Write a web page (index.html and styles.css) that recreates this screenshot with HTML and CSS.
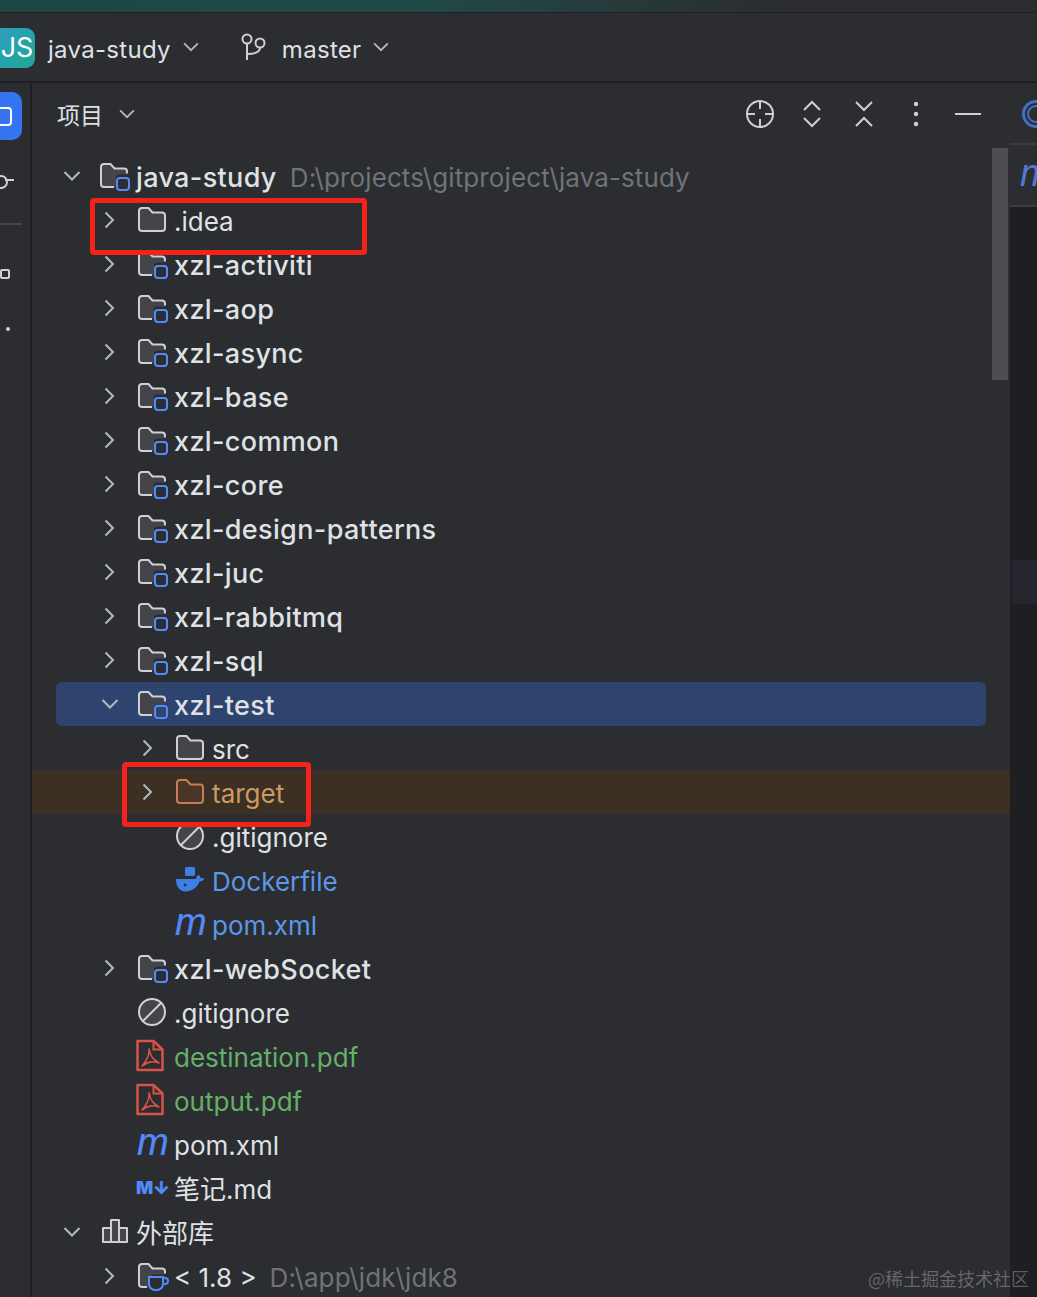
FILE: index.html
```html
<!DOCTYPE html>
<html lang="en">
  <head>
    <meta charset="UTF-8">
    <title>java-study</title>
    <link rel="stylesheet" href="styles.css">
  </head>
  <body>
    <svg class="defs" width="0" height="0">
      <symbol id="folder" viewBox="0 0 32 30">
        <path d="M1 21V4a3 3 0 0 1 3-3h6.500l4 4.500H24a3 3 0 0 1 3 3V21a3 3 0 0 1-3 3H4a3 3 0 0 1-3-3z" fill="#43454a" stroke="#ced0d6" stroke-width="2"/>
      </symbol>
      <symbol id="folder-target" viewBox="0 0 32 30">
        <path d="M1 21V4a3 3 0 0 1 3-3h6.500l4 4.500H24a3 3 0 0 1 3 3V21a3 3 0 0 1-3 3H4a3 3 0 0 1-3-3z" fill="#4a3629" stroke="#c77d55" stroke-width="2"/>
      </symbol>
      <symbol id="module" viewBox="0 0 32 30">
        <path d="M1 21V4a3 3 0 0 1 3-3h6.500l4 4.500H24a3 3 0 0 1 3 3v3H19a3 3 0 0 0-3 3V24H4a3 3 0 0 1-3-3z" fill="#43454a"/>
        <path d="M14 24H4a3 3 0 0 1-3-3V4a3 3 0 0 1 3-3h6.500l4 4.500H24a3 3 0 0 1 3 3v2" fill="none" stroke="#ced0d6" stroke-width="2"/>
        <rect x="17" y="15" width="12" height="12" rx="3" fill="none" stroke="#548af7" stroke-width="2"/>
      </symbol>
      <symbol id="jdk" viewBox="0 0 32 30">
        <path d="M1 21V4a3 3 0 0 1 3-3h6.500l4 4.500H24a3 3 0 0 1 3 3v3H14V24H4a3 3 0 0 1-3-3z" fill="#43454a"/>
        <path d="M9 24H4a3 3 0 0 1-3-3V4a3 3 0 0 1 3-3h6.500l4 4.500H24a3 3 0 0 1 3 3v2" fill="none" stroke="#ced0d6" stroke-width="2"/>
        <path d="M11 14h14v7a6 6 0 0 1-6 6h-2a6 6 0 0 1-6-6zM25 15h2a2.500 2.500 0 0 1 0 6h-2" fill="#2b2d30" stroke="#548af7" stroke-width="2"/>
      </symbol>
      <symbol id="ignore" viewBox="0 0 32 30">
        <circle cx="14" cy="14" r="13" fill="#43454a" stroke="#ced0d6" stroke-width="2"/>
        <path d="M5 23 23 5" stroke="#ced0d6" stroke-width="2"/>
      </symbol>
      <symbol id="pdf" viewBox="0 0 30 34">
        <path d="M1.500 3h16l9 8.500V32H1.500z" fill="none" stroke="#d9534a" stroke-width="2.500" stroke-linejoin="round"/>
        <path d="M17.500 3v8.500h9" fill="none" stroke="#d9534a" stroke-width="2"/>
        <path d="M13 11c1 6 3 10 10 14-6-2-10-2-17 3 3-3 8-11 7-17z" fill="none" stroke="#d9534a" stroke-width="1.600" stroke-linejoin="round"/>
      </symbol>
      <symbol id="docker" viewBox="0 0 32 30">
        <rect x="9" y="0" width="10" height="9" rx="1.500" fill="#3d7fe8"/>
        <path d="M0 12h20c.5-3 2-4 3-4 1 1 1.500 2 1.500 3 1.500 0 3 0 4 .500-1 2-3 3-5 3-2 6-8 10-14 10-6 0-9.500-5-9.500-12.500z" fill="#3d7fe8"/>
        <circle cx="9" cy="18" r="1.400" fill="#2b2d30"/>
      </symbol>
      <symbol id="chev-right" viewBox="0 0 24 24">
        <path d="M7.500 4.500 15 12 7.500 19.500" fill="none" stroke="#b4b8bf" stroke-width="2"/>
      </symbol>
      <symbol id="chev-down" viewBox="0 0 24 24">
        <path d="M4.500 8 12 15.500 19.500 8" fill="none" stroke="#b4b8bf" stroke-width="2"/>
      </symbol>
    </svg>

    <div class="top-strip"></div>

    <header class="title-bar">
      <span class="project-tile">JS</span>
      <span class="bar-label">java-study</span>
      <svg class="bar-chevron"><use href="#chev-down"/></svg>
      <svg class="branch-icon" viewBox="0 0 26 28">
        <circle cx="7" cy="6" r="4.500" fill="none" stroke="#ced0d6" stroke-width="2"/>
        <circle cx="20" cy="10" r="4.500" fill="none" stroke="#ced0d6" stroke-width="2"/>
        <path d="M7 10.500V27M7 21c7 0 13-1 13-6.500" fill="none" stroke="#ced0d6" stroke-width="2"/>
      </svg>
      <span class="bar-label branch-label">master</span>
      <svg class="bar-chevron"><use href="#chev-down"/></svg>
    </header>

    <main class="workspace">
      <nav class="rail">
        <div class="rail-active"><span class="rail-square"></span></div>
        <div class="rail-pin"></div>
        <div class="rail-sep"></div>
        <div class="rail-small"></div>
        <div class="rail-dot"></div>
      </nav>

      <section class="panel">
        <div class="panel-head">
          <span class="panel-title">项目</span>
          <svg class="panel-chevron"><use href="#chev-down"/></svg>
          <div class="tools">
            <svg class="tool" viewBox="0 0 30 30">
              <circle cx="15" cy="15" r="13" fill="none" stroke="#ced0d6" stroke-width="2"/>
              <path d="M15 2v8M15 20v8M2 15h8M20 15h8" stroke="#ced0d6" stroke-width="2"/>
            </svg>
            <svg class="tool" viewBox="0 0 30 30">
              <path d="M7 11l8-8 8 8M7 19l8 8 8-8" fill="none" stroke="#ced0d6" stroke-width="2"/>
            </svg>
            <svg class="tool" viewBox="0 0 30 30">
              <path d="M7 3l8 8 8-8M7 27l8-8 8 8" fill="none" stroke="#ced0d6" stroke-width="2"/>
            </svg>
            <svg class="tool" viewBox="0 0 30 30">
              <circle cx="15" cy="5" r="2.200" fill="#ced0d6"/>
              <circle cx="15" cy="15" r="2.200" fill="#ced0d6"/>
              <circle cx="15" cy="25" r="2.200" fill="#ced0d6"/>
            </svg>
            <svg class="tool" viewBox="0 0 30 30">
              <path d="M2 15h26" stroke="#ced0d6" stroke-width="2"/>
            </svg>
          </div>
        </div>

        <ul class="tree">
          <li class="row l0">
            <svg class="chev"><use href="#chev-down"/></svg>
            <svg class="icon"><use href="#module"/></svg>
            <span class="name module">java-study</span>
            <span class="path">D:\projects\gitproject\java-study</span>
          </li>
          <li class="row l1">
            <svg class="chev"><use href="#chev-right"/></svg>
            <svg class="icon"><use href="#folder"/></svg>
            <span class="name">.idea</span>
          </li>
          <li class="row l1">
            <svg class="chev"><use href="#chev-right"/></svg>
            <svg class="icon"><use href="#module"/></svg>
            <span class="name module">xzl-activiti</span>
          </li>
          <li class="row l1">
            <svg class="chev"><use href="#chev-right"/></svg>
            <svg class="icon"><use href="#module"/></svg>
            <span class="name module">xzl-aop</span>
          </li>
          <li class="row l1">
            <svg class="chev"><use href="#chev-right"/></svg>
            <svg class="icon"><use href="#module"/></svg>
            <span class="name module">xzl-async</span>
          </li>
          <li class="row l1">
            <svg class="chev"><use href="#chev-right"/></svg>
            <svg class="icon"><use href="#module"/></svg>
            <span class="name module">xzl-base</span>
          </li>
          <li class="row l1">
            <svg class="chev"><use href="#chev-right"/></svg>
            <svg class="icon"><use href="#module"/></svg>
            <span class="name module">xzl-common</span>
          </li>
          <li class="row l1">
            <svg class="chev"><use href="#chev-right"/></svg>
            <svg class="icon"><use href="#module"/></svg>
            <span class="name module">xzl-core</span>
          </li>
          <li class="row l1">
            <svg class="chev"><use href="#chev-right"/></svg>
            <svg class="icon"><use href="#module"/></svg>
            <span class="name module">xzl-design-patterns</span>
          </li>
          <li class="row l1">
            <svg class="chev"><use href="#chev-right"/></svg>
            <svg class="icon"><use href="#module"/></svg>
            <span class="name module">xzl-juc</span>
          </li>
          <li class="row l1">
            <svg class="chev"><use href="#chev-right"/></svg>
            <svg class="icon"><use href="#module"/></svg>
            <span class="name module">xzl-rabbitmq</span>
          </li>
          <li class="row l1">
            <svg class="chev"><use href="#chev-right"/></svg>
            <svg class="icon"><use href="#module"/></svg>
            <span class="name module">xzl-sql</span>
          </li>
          <li class="row l1 selected">
            <svg class="chev"><use href="#chev-down"/></svg>
            <svg class="icon"><use href="#module"/></svg>
            <span class="name module">xzl-test</span>
          </li>
          <li class="row l2">
            <svg class="chev"><use href="#chev-right"/></svg>
            <svg class="icon"><use href="#folder"/></svg>
            <span class="name">src</span>
          </li>
          <li class="row l2 excluded">
            <svg class="chev"><use href="#chev-right"/></svg>
            <svg class="icon"><use href="#folder-target"/></svg>
            <span class="name">target</span>
          </li>
          <li class="row l2">
            <span class="chev"></span>
            <svg class="icon icon-round"><use href="#ignore"/></svg>
            <span class="name">.gitignore</span>
          </li>
          <li class="row l2">
            <span class="chev"></span>
            <svg class="icon"><use href="#docker"/></svg>
            <span class="name blue">Dockerfile</span>
          </li>
          <li class="row l2">
            <span class="chev"></span>
            <span class="icon maven">m</span>
            <span class="name blue">pom.xml</span>
          </li>
          <li class="row l1">
            <svg class="chev"><use href="#chev-right"/></svg>
            <svg class="icon"><use href="#module"/></svg>
            <span class="name module">xzl-webSocket</span>
          </li>
          <li class="row l1">
            <span class="chev"></span>
            <svg class="icon icon-round"><use href="#ignore"/></svg>
            <span class="name">.gitignore</span>
          </li>
          <li class="row l1">
            <span class="chev"></span>
            <svg class="icon icon-pdf"><use href="#pdf"/></svg>
            <span class="name green">destination.pdf</span>
          </li>
          <li class="row l1">
            <span class="chev"></span>
            <svg class="icon icon-pdf"><use href="#pdf"/></svg>
            <span class="name green">output.pdf</span>
          </li>
          <li class="row l1">
            <span class="chev"></span>
            <span class="icon maven">m</span>
            <span class="name">pom.xml</span>
          </li>
          <li class="row l1">
            <span class="chev"></span>
            <span class="icon markdown">M↓</span>
            <span class="name cjk">笔记.md</span>
          </li>
          <li class="row l0">
            <svg class="chev"><use href="#chev-down"/></svg>
            <svg class="icon" viewBox="0 0 32 30">
              <path d="M3 9h8v14H3zM11 1h8v22h-8zM19 9h8v14h-8z" fill="#43454a" stroke="#ced0d6" stroke-width="2" stroke-linejoin="round"/>
            </svg>
            <span class="name cjk">外部库</span>
          </li>
          <li class="row l1">
            <svg class="chev"><use href="#chev-right"/></svg>
            <svg class="icon"><use href="#jdk"/></svg>
            <span class="name">&lt; 1.8 &gt;</span>
            <span class="path">D:\app\jdk\jdk8</span>
          </li>
        </ul>

        <div class="scroll-thumb"></div>
        <div class="mark mark-idea"></div>
        <div class="mark mark-target"></div>
      </section>

      <aside class="editor-edge">
        <div class="edge-tab"><span class="edge-ring"></span></div>
        <div class="edge-file">m</div>
        <div class="edge-thumb"></div>
      </aside>
    </main>

    <div class="watermark">@稀土掘金技术社区</div>
  </body>
</html>
```

FILE: styles.css
```css
* {
  box-sizing: border-box;
}

html,
body {
  height: 100%;
}

body {
  margin: 0;
  overflow: hidden;
  position: relative;
  background-color: #2b2d30;
  color: #dfe1e5;
  font-family: Inter, "Noto Sans CJK SC", sans-serif;
  display: flex;
  flex-direction: column;
}

.defs {
  position: absolute;
}

.top-strip {
  height: 13px;
  background: linear-gradient(90deg, #1d4645 0%, #204a47 40%, #2b2d30 75%);
  border-bottom: 1px solid #1e1f22;
}

.title-bar {
  height: 70px;
  display: flex;
  align-items: center;
  border-bottom: 2px solid #1e1f22;
  padding-top: 3px;
}

.project-tile {
  width: 36px;
  height: 40px;
  margin-left: -1px;
  margin-top: -2px;
  border-radius: 0 9px 9px 0;
  background: linear-gradient(135deg, #2d9fc0, #1fa695);
  color: #fff;
  font-size: 27px;
  line-height: 40px;
  text-align: center;
}

.bar-label {
  margin-left: 13px;
  margin-top: 2px;
  font-size: 24px;
  letter-spacing: 0.3px;
  color: #dfe1e5;
}

.bar-chevron {
  width: 22px;
  height: 22px;
  margin-left: 9px;
  margin-top: -4px;
}

.branch-icon {
  width: 26px;
  height: 28px;
  margin-left: 38px;
  margin-top: -3px;
}

.branch-label {
  margin-left: 16px;
}

.workspace {
  flex: 1;
  min-height: 0;
  display: flex;
}

.rail {
  width: 32px;
  flex: none;
  border-right: 2px solid #1e1f22;
  padding-top: 9px;
}

.rail-active {
  width: 48px;
  height: 48px;
  margin-left: -26px;
  border-radius: 10px;
  background-color: #3574f0;
  display: flex;
  align-items: center;
  justify-content: flex-end;
  padding-right: 10px;
}

.rail-square {
  width: 22px;
  height: 19px;
  flex: none;
  border: 2px solid #fff;
  border-radius: 4px;
}

.rail-pin {
  width: 9px;
  height: 2px;
  margin: 39px 0 0 5px;
  background-color: #ced0d6;
  position: relative;
}

.rail-pin::before {
  content: "";
  position: absolute;
  left: -11px;
  top: -4px;
  width: 10px;
  height: 10px;
  border: 2px solid #ced0d6;
  border-radius: 50%;
}

.rail-sep {
  width: 22px;
  height: 2px;
  margin-top: 42px;
  background-color: #43454a;
}

.rail-small {
  width: 10px;
  height: 10px;
  margin-top: 44px;
  border: 2px solid #ced0d6;
  border-radius: 2px;
}

.rail-dot {
  width: 4px;
  height: 4px;
  margin: 48px 0 0 6px;
  border-radius: 50%;
  background-color: #ced0d6;
}

.panel {
  flex: 1;
  min-width: 0;
  position: relative;
}

.panel-head {
  height: 65px;
  display: flex;
  align-items: center;
  padding: 0 27px 3px 25px;
}

.panel-title {
  font-size: 23px;
  font-family: "Noto Sans CJK SC", sans-serif;
}

.panel-chevron {
  width: 22px;
  height: 22px;
  margin-left: 13px;
}

.tools {
  margin-left: auto;
  display: flex;
  gap: 22px;
}

.tool {
  width: 30px;
  height: 30px;
}

.tree {
  list-style: none;
  margin: 0;
  padding: 6px 0 0;
}

.row {
  height: 44px;
  margin: 0 24px;
  display: flex;
  align-items: center;
  font-size: 26px;
  white-space: nowrap;
}

.l0 {
  padding-left: 4px;
}

.l1 {
  padding-left: 42px;
}

.l2 {
  padding-left: 80px;
}

.selected {
  background-color: #2e436e;
  border-radius: 6px;
}

.excluded {
  margin: 0;
  padding-left: 104px;
  background-color: #3b3023;
}

.excluded .name {
  color: #cf9a62;
}

.chev {
  width: 24px;
  height: 24px;
  flex: none;
  margin-right: 16px;
}

.icon {
  width: 32px;
  height: 30px;
  flex: none;
  margin-right: 4px;
  margin-top: 4px;
}

.icon-round {
  margin-top: 2px;
}

.icon-pdf {
  width: 30px;
  height: 34px;
  margin-left: -2px;
  margin-right: 8px;
  margin-top: -3px;
}

.name,
.path {
  margin-top: 2px;
}

.module {
  font-size: 27px;
  font-weight: 500;
  letter-spacing: 0.35px;
}

.cjk {
  margin-top: -1px;
}

.path {
  margin-left: 13px;
  color: #6f737a;
  letter-spacing: 0.1px;
}

.blue {
  color: #5c97e8;
}

.green {
  color: #64b06a;
}

.maven {
  color: #548af7;
  font-family: "Liberation Sans", sans-serif;
  font-style: italic;
  font-size: 38px;
  line-height: 30px;
  margin-top: -4px;
  margin-left: -1px;
  margin-right: 5px;
  -webkit-text-stroke: 0.2px #548af7;
}

.markdown {
  color: #548af7;
  font-weight: 900;
  font-size: 18px;
  line-height: 30px;
  margin-top: 0;
  margin-left: -2px;
  margin-right: 6px;
  letter-spacing: -0.5px;
}

.scroll-thumb {
  position: absolute;
  top: 65px;
  right: 2px;
  width: 16px;
  height: 232px;
  background-color: #4d4e51;
}

.mark {
  position: absolute;
  border: 5px solid #f5211b;
  border-radius: 4px;
}

.mark-idea {
  left: 58px;
  top: 115px;
  width: 277px;
  height: 57px;
}

.mark-target {
  left: 90px;
  top: 679px;
  width: 189px;
  height: 65px;
}

.editor-edge {
  width: 27px;
  flex: none;
  position: relative;
  overflow: hidden;
  background-color: #1e1f22;
}

.edge-tab {
  height: 62px;
  padding: 17px 0 0 12px;
  border-bottom: 2px solid #393b40;
  background-color: #2b2d30;
}

.edge-ring {
  display: flex;
  align-items: center;
  justify-content: center;
  width: 28px;
  height: 28px;
  border: 3px solid #3f6fc4;
  border-radius: 50%;
}

.edge-ring::after {
  content: "";
  width: 14px;
  height: 14px;
  border: 2px solid #3f6fc4;
  border-radius: 50%;
}

.edge-file {
  height: 62px;
  padding-left: 10px;
  border-bottom: 2px solid #393b40;
  background-color: #2b2d30;
  color: #4f78d0;
  font-family: "Liberation Sans", sans-serif;
  font-style: italic;
  font-size: 38px;
  line-height: 56px;
}

.edge-thumb {
  position: absolute;
  top: 477px;
  left: 2px;
  width: 25px;
  height: 44px;
  background-color: #26272e;
}

.watermark {
  position: absolute;
  right: 8px;
  bottom: 7px;
  color: rgba(255, 255, 255, 0.28);
  font-family: "Noto Sans CJK SC", sans-serif;
  font-size: 18px;
  line-height: 24px;
}
```
